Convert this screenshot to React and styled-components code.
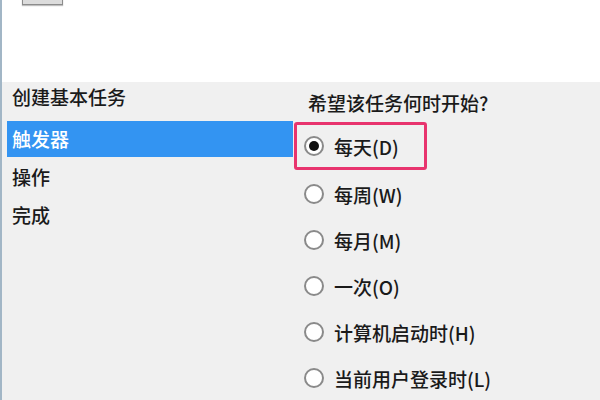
import React from 'react';
import styled, { createGlobalStyle } from 'styled-components';

const GlobalStyle = createGlobalStyle`
  html, body {
    margin: 0;
    padding: 0;
    background: #f0f0f0;
  }
  body {
    font-family: "Noto Sans CJK SC", "Noto Sans", "Liberation Sans", sans-serif;
    font-weight: 500;
    color: #1a1a1a;
  }
`;

const _Window = styled.div`
  width: 600px;
  height: 400px;
  overflow: hidden;
  display: flex;
  flex-direction: column;
  border-left: 2px solid #a2b6c6;
  box-sizing: border-box;
  background: #f0f0f0;
`;

const _Header = styled.div`
  height: 82px;
  flex: none;
  background: #ffffff;
  overflow: hidden;
`;

const _HeaderRow = styled.div`
  display: flex;
  align-items: flex-end;
  gap: 28px;
  margin-top: -36px;
  padding-left: 20px;
`;

const _HeaderIcon = styled.div`
  width: 39px;
  height: 39px;
  background: #dcdcdc;
  border: 1px solid #8c8c8c;
  box-shadow: 0 1px 1px rgba(0, 0, 0, 0.25);
`;

const _HeaderTitle = styled.div`
  font-size: 19px;
  line-height: 30px;
  color: #f3f3f3;
  margin-bottom: 1px;
`;

const _Body = styled.div`
  flex: 1;
  display: flex;
  background: #f0f0f0;
`;

const _Nav = styled.ul`
  list-style: none;
  margin: 0;
  padding: 0 0 0 5px;
  width: 286px;
  flex: none;
  display: flex;
  flex-direction: column;
  gap: 2px;
`;

const _NavTitle = styled.li`
  height: 30px;
  line-height: 30px;
  font-size: 19px;
  padding-left: 5px;
  margin-bottom: 7px;
`;

const _NavItem = styled.li`
  height: 36px;
  line-height: 36px;
  font-size: 19px;
  padding-left: 5px;
  background: ${p => (p.$active ? '#3394f2' : 'transparent')};
  color: ${p => (p.$active ? '#ffffff' : '#1a1a1a')};
`;

const _Main = styled.div`
  flex: 1;
  display: flex;
  flex-direction: column;
  padding-left: 1px;
`;

const _Question = styled.div`
  font-size: 19px;
  line-height: 26px;
  margin: 8px 0 6px 14px;
`;

const _Options = styled.div`
  display: flex;
  flex-direction: column;
  align-items: flex-start;
`;

const _Option = styled.label`
  display: flex;
  align-items: center;
  gap: 10px;
  box-sizing: border-box;
  height: ${p => (p.$marked ? 48 : 46)}px;
  padding: 0 25px 0 7px;
  margin-bottom: ${p => (p.$marked ? 1 : 0)}px;
  border: 3px solid ${p => (p.$marked ? '#e8346e' : 'transparent')};
  border-radius: 3px;
  font-size: 19px;
`;

const _Radio = styled.span`
  width: 20px;
  height: 20px;
  box-sizing: border-box;
  border-radius: 50%;
  border: 2px solid #8a8a8a;
  background: #ffffff;
  display: flex;
  align-items: center;
  justify-content: center;

  &::after {
    content: '';
    width: 10px;
    height: 10px;
    border-radius: 50%;
    background: ${p => (p.$checked ? '#111111' : 'transparent')};
  }
`;

const options = [
  { label: '每天(D)', checked: true },
  { label: '每周(W)' },
  { label: '每月(M)' },
  { label: '一次(O)' },
  { label: '计算机启动时(H)' },
  { label: '当前用户登录时(L)' }
];

export default function App() {
  return (
    <>
      <GlobalStyle />
      <_Window>
        <_Header>
          <_HeaderRow>
            <_HeaderIcon />
            <_HeaderTitle>创建基本任务向导</_HeaderTitle>
          </_HeaderRow>
        </_Header>
        <_Body>
          <_Nav>
            <_NavTitle>创建基本任务</_NavTitle>
            <_NavItem $active>触发器</_NavItem>
            <_NavItem>操作</_NavItem>
            <_NavItem>完成</_NavItem>
          </_Nav>
          <_Main>
            <_Question>希望该任务何时开始?</_Question>
            <_Options>
              {options.map(_ => (
                <_Option key={_.label} $marked={_.checked}>
                  <_Radio $checked={_.checked} />
                  {_.label}
                </_Option>
              ))}
            </_Options>
          </_Main>
        </_Body>
      </_Window>
    </>
  );
}
